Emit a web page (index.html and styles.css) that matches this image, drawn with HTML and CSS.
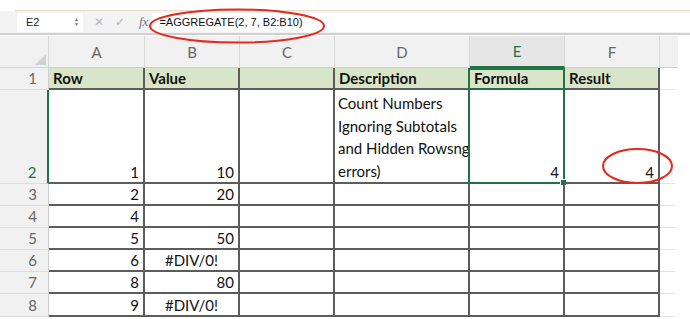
FILE: index.html
```html
<!DOCTYPE html>
<html lang="en">
<head>
  <meta charset="UTF-8" />
  <title>AGGREGATE example</title>
  <link rel="stylesheet" href="styles.css">
</head>
<body>
  <div class="top"></div>
  <div class="fbar">
    <div class="namebox">
      <span>E2</span>
      <span class="spin"><i>&#9650;</i><i>&#9660;</i></span>
    </div>
    <span class="ficon cross">&#x2715;</span>
    <span class="ficon check">&#x2713;</span>
    <span class="fx">fx</span>
    <div class="finput">=AGGREGATE(2, 7, B2:B10)</div>
  </div>

  <div class="sheet">
    <div class="corner"><span class="tri"></span></div>
    <div class="colh">A</div>
    <div class="colh">B</div>
    <div class="colh">C</div>
    <div class="colh">D</div>
    <div class="colh sel">E</div>
    <div class="colh">F</div>
    <div class="colh rest"></div>

    <div class="rowh">1</div>
    <div class="cell head">Row</div>
    <div class="cell head">Value</div>
    <div class="cell head"></div>
    <div class="cell head">Description</div>
    <div class="cell head gsel">Formula</div>
    <div class="cell head">Result</div>
    <div class="cell rest"></div>

    <div class="rowh sel">2</div>
    <div class="cell num">1</div>
    <div class="cell num">10</div>
    <div class="cell"></div>
    <div class="cell wrap">Count Numbers<br>Ignoring Subtotals<br>and Hidden Rowsng<br>errors)</div>
    <div class="cell num gsel2">4<span class="handle"></span></div>
    <div class="cell num">4</div>
    <div class="cell rest"></div>

    <div class="rowh">3</div>
    <div class="cell num">2</div>
    <div class="cell num">20</div>
    <div class="cell"></div><div class="cell"></div><div class="cell"></div><div class="cell"></div>
    <div class="cell rest"></div>

    <div class="rowh">4</div>
    <div class="cell num">4</div>
    <div class="cell num"></div>
    <div class="cell"></div><div class="cell"></div><div class="cell"></div><div class="cell"></div>
    <div class="cell rest"></div>

    <div class="rowh">5</div>
    <div class="cell num">5</div>
    <div class="cell num">50</div>
    <div class="cell"></div><div class="cell"></div><div class="cell"></div><div class="cell"></div>
    <div class="cell rest"></div>

    <div class="rowh">6</div>
    <div class="cell num">6</div>
    <div class="cell err">#DIV/0!</div>
    <div class="cell"></div><div class="cell"></div><div class="cell"></div><div class="cell"></div>
    <div class="cell rest"></div>

    <div class="rowh">7</div>
    <div class="cell num">8</div>
    <div class="cell num">80</div>
    <div class="cell"></div><div class="cell"></div><div class="cell"></div><div class="cell"></div>
    <div class="cell rest"></div>

    <div class="rowh">8</div>
    <div class="cell num">9</div>
    <div class="cell err">#DIV/0!</div>
    <div class="cell"></div><div class="cell"></div><div class="cell"></div><div class="cell"></div>
    <div class="cell rest"></div>
  </div>

  <!-- red marks drawn over the screenshot -->
  <svg class="marks" width="690" height="319" viewBox="0 0 690 319">
    <ellipse cx="237" cy="26" rx="87" ry="16.5" fill="none" stroke="#e42a1d" stroke-width="2"/>
    <ellipse cx="637.5" cy="166" rx="34.5" ry="17" fill="none" stroke="#e42a1d" stroke-width="2"/>
  </svg>
</body>
</html>
```

FILE: styles.css
```css
body { margin: 0; background: #fff; font-family: Lato, "Open Sans", sans-serif; overflow: hidden; }

.top { height: 10px; background: #fff; border-bottom: 1px solid #eadcc0; margin-left: 15px; }

.fbar {
  display: flex; align-items: center;
  height: 22px; background: #f3f3f3;
  border-bottom: 2px solid #cfcfcf;
  font-family: "Liberation Sans", Arial, sans-serif;
}
.namebox {
  display: flex; align-items: center; justify-content: space-between;
  margin-left: 17px; width: 66px; height: 19px; padding: 0 4px 0 9px;
  background: #fff; font-size: 11px; color: #222; box-sizing: border-box;
}
.spin { display: flex; flex-direction: column; font-size: 5px; color: #777; line-height: 5px; }
.spin i { font-style: normal; }
.ficon { color: #b8b8b8; font-size: 12px; }
.cross { margin-left: 11px; }
.check { margin-left: 11px; }
.fx { margin-left: 14px; font-family: "Liberation Serif", serif; font-style: italic; font-size: 13px; color: #777; }
.finput {
  flex: 1; margin-left: 4px; height: 19px; background: #fff;
  font-size: 11px; color: #111; line-height: 19px; padding-left: 7px;
}

.sheet {
  display: grid;
  grid-template-columns: 49px 96px 95px 95px 135px 95px 95px 1fr;
  grid-template-rows: 32px 22px 94px 22px 22px 22px 22px 22px 23px;
  margin-top: 1px;
}

.corner { background: #f0f0f0; border-right: 1px solid #d6d6d6; border-bottom: 1px solid #d6d6d6; position: relative; }
.tri {
  position: absolute; right: 2px; bottom: 2px;
  border-left: 11px solid transparent; border-bottom: 11px solid #d2d2d2;
}
.colh {
  display: flex; align-items: center; justify-content: center;
  background: #f1f1f1; color: #666; font-size: 15px;
  border-right: 1px solid #d8d8d8; border-bottom: 1px solid #d0d0d0;
}
.colh.sel { background: #e6e6e6; color: #217346; border-bottom: 2px solid #217346; }
.colh.rest { border-right: none; margin-right: 12px; }

.rowh {
  display: flex; align-items: flex-end; justify-content: center;
  padding: 0 0 2px 17px; background: #f1f1f1; color: #666; font-size: 15px;
  border-right: 1px solid #cfcfcf; border-bottom: 1px solid #dcdcdc;
}
.rowh.sel { color: #217346; border-right: 2px solid #217346; }

.cell {
  display: flex; align-items: flex-end;
  padding: 0 4px 1px 4px; font-size: 15px; color: #111;
  border-right: 2px solid #5c5c5c; border-bottom: 2px solid #5c5c5c;
  position: relative; white-space: nowrap;
}
.cell.head { background: #d9e5c8; font-weight: bold; }
.cell.num { justify-content: flex-end; }
.cell.err { justify-content: center; }
.cell.wrap { line-height: 22.5px; padding-bottom: 0; padding-left: 3px; }
.cell.rest { border-right: none; border-bottom: 1px solid #e4e4e4; margin-right: 15px; }
.cell.gsel { border: 2px solid #217346; margin-left: -2px; }
.cell.gsel2 { border: 2px solid #217346; border-top: none; margin-left: -2px; }
.handle { position: absolute; right: -4px; bottom: -4px; width: 5px; height: 5px; background: #217346; border: 1px solid #fff; }

.marks { position: absolute; left: 0; top: 0; pointer-events: none; }
```
